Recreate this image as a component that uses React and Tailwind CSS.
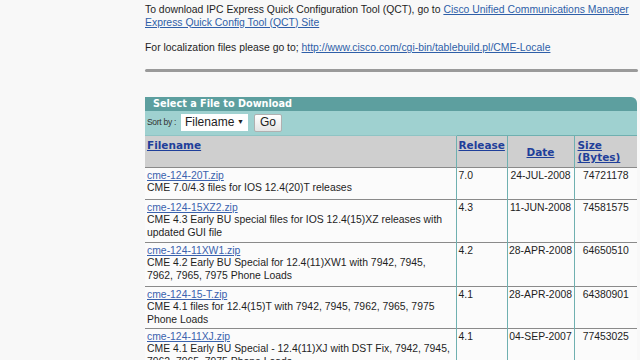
import React from 'react';

const rows = [
  { file: 'cme-124-20T.zip', desc: 'CME 7.0/4.3 files for IOS 12.4(20)T releases', rel: '7.0', date: '24-JUL-2008', size: '74721178', h: 'h-[32px]' },
  { file: 'cme-124-15XZ2.zip', desc: 'CME 4.3 Early BU special files for IOS 12.4(15)XZ releases with updated GUI file', rel: '4.3', date: '11-JUN-2008', size: '74581575', h: 'h-[43px]' },
  { file: 'cme-124-11XW1.zip', desc: 'CME 4.2 Early BU Special for 12.4(11)XW1 with 7942, 7945, 7962, 7965, 7975 Phone Loads', rel: '4.2', date: '28-APR-2008', size: '64650510', h: 'h-[44px]' },
  { file: 'cme-124-15-T.zip', desc: 'CME 4.1 files for 12.4(15)T with 7942, 7945, 7962, 7965, 7975 Phone Loads', rel: '4.1', date: '28-APR-2008', size: '64380901', h: 'h-[42px]' },
  { file: 'cme-124-11XJ.zip', desc: 'CME 4.1 Early BU Special - 12.4(11)XJ with DST Fix, 7942, 7945, 7962, 7965, 7975 Phone Loads', rel: '4.1', date: '04-SEP-2007', size: '77453025', h: 'h-[44px]' },
];

export default function App() {
  return (
    <div className="w-[640px] h-[360px] overflow-hidden bg-[#f8f8f8] text-[#1e1e1e] font-['Liberation_Sans',Arial,sans-serif] text-[10.4px] leading-[12.5px]">
      <div className="ml-[145px] w-[493px] pt-[4px]">
        <p>
          To download IPC Express Quick Configuration Tool (QCT), go to{' '}
          <a className="text-[#2f5fa8] underline">Cisco Unified Communications Manager Express Quick Config Tool (QCT) Site</a>
        </p>
        <p className="mt-[13px]">
          For localization files please go to;{' '}
          <a className="text-[#2f5fa8] underline">http://www.cisco.com/cgi-bin/tablebuild.pl/CME-Locale</a>
        </p>
        <div className="mt-[14px] h-[3px] bg-[#9a9a9a] rounded-full" />

        {/* download table */}
        <div className="mt-[25px] w-[492px]">
          <div className="h-[14px] bg-[#5d9f9f] rounded-tr-[6px] pl-[8px] text-white font-bold font-['DejaVu_Sans',Verdana,sans-serif] text-[9.7px] leading-[14px]">
            Select a File to Download
          </div>
          <div className="h-[24px] bg-[#9fd1d0] flex items-center pl-[2px] gap-[5px]">
            <span className="text-[8.5px] text-[#333] tracking-[-0.3px]">Sort by :</span>
            <div className="w-[67px] h-[17px] bg-white flex items-center justify-between px-[4px] text-[12px] text-[#222]">
              <span>Filename</span>
              <span className="text-[7px]">▼</span>
            </div>
            <div className="ml-[1px] w-[28px] h-[18px] bg-gradient-to-b from-white to-[#e4e4e4] border border-[#b0b0b0] flex items-center justify-center text-[12px] text-[#222] rounded-[2px]">
              Go
            </div>
          </div>
          <table className="w-full table-fixed border-collapse bg-[#fbfbfb]">
            <colgroup>
              <col className="w-[311px]" />
              <col className="w-[51px]" />
              <col className="w-[67px]" />
              <col />
            </colgroup>
            <thead>
              <tr className="h-[32px] bg-[#cfcfcf] font-['DejaVu_Sans',Verdana,sans-serif] font-bold text-[10.5px] leading-[12.5px] text-[#1f3f9a]">
                <th className="text-left align-top pl-[2px] pt-[3px] border-t border-[#8fc4c4]"><span className="underline">Filename</span></th>
                <th className="text-left align-top pl-[2px] pt-[3px] border-l border-[#6fb0b0] border-t"><span className="underline">Release</span></th>
                <th className="text-center align-middle pt-[2px] border-l border-[#6fb0b0] border-t"><span className="underline">Date</span></th>
                <th className="text-left align-top pl-[3px] pt-[3px] border-l border-[#6fb0b0] border-t"><span className="underline">Size<br />(Bytes)</span></th>
              </tr>
            </thead>
            <tbody>
              {rows.map((r) => (
                <tr key={r.file} className={`${r.h} border-t border-[#8a8a8a]`}>
                  <td className="align-top pl-[2px] pt-[2px] pr-[2px]">
                    <a className="text-[#3a62ae] underline">{r.file}</a>
                    <div>{r.desc}</div>
                  </td>
                  <td className="align-top pl-[2px] pt-[2px] border-l border-[#6fb0b0]">{r.rel}</td>
                  <td className="align-top text-center pt-[2px] border-l border-[#6fb0b0] whitespace-nowrap">{r.date}</td>
                  <td className="align-top text-center pt-[2px] border-l border-[#6fb0b0] whitespace-nowrap">{r.size}</td>
                </tr>
              ))}
            </tbody>
          </table>
        </div>
      </div>
    </div>
  );
}
